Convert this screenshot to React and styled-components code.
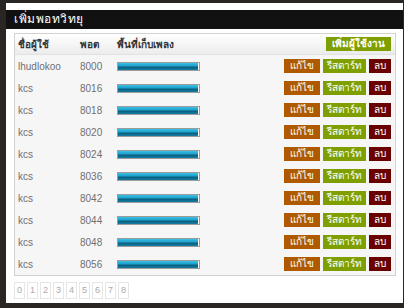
import React from 'react';
import styled, { createGlobalStyle } from 'styled-components';

const Global = createGlobalStyle`
  html, body {
    margin: 0;
    padding: 0;
    background: #2a2623;
    font-family: "Liberation Sans", "Noto Sans", sans-serif;
  }
`;

const Modal = styled.div`
  margin: 3px 1px 0 6px;
  height: 300px;
  background: #fff;
  padding-top: 7px;
  box-sizing: border-box;
`;

const TitleBar = styled.div`
  height: 19px;
  background: #111;
  color: #fff;
  font-size: 12px;
  line-height: 19px;
  padding-left: 8px;
  letter-spacing: 0.5px;
`;

const Panel = styled.div`
  margin: 4px 7px 0 8px;
  border: 1px solid #d2d2d2;
  background: #f6f6f6;
`;

const HeadRow = styled.div`
  display: flex;
  align-items: center;
  height: 20px;
  padding: 0 4px 0 3px;
  background: linear-gradient(#ffffff, #ececec);
  border-bottom: 1px solid #e2e2e2;
  font-size: 10px;
  font-weight: bold;
  color: #333;
`;

const Row = styled.div`
  display: flex;
  align-items: center;
  height: 22px;
  padding: 0 4px 0 3px;
  font-size: 10px;
  color: #707070;
`;

const NameCell = styled.div`
  width: 62px;
`;

const PortCell = styled.div`
  width: 37px;
`;

const SpaceCell = styled.div`
  flex: 1;
`;

const Bar = styled.div`
  width: 80px;
  height: 7px;
  border: 1px solid #9c9c9c;
  background: #fff;
  padding-right: 1px;
`;

const Fill = styled.div`
  height: 100%;
  background: linear-gradient(#3cc0e4 0%, #1fa2cc 40%, #0b5f80 60%, #157fa6 100%);
`;

const Actions = styled.div`
  display: flex;
  gap: 3px;
`;

const Btn = styled.div`
  height: 14px;
  line-height: 14px;
  padding: 0 ${p => p.pad || 4}px;
  color: #fff;
  font-size: 10px;
  background: ${p => p.bg};
  font-weight: ${p => (p.bold ? 'bold' : 'normal')};
`;

const Pager = styled.div`
  display: flex;
  gap: 2px;
  margin: 6px 0 0 8px;
`;

const Page = styled.div`
  width: 9px;
  height: 15px;
  border: 1px solid #e6e6e6;
  color: #aaa;
  font-size: 9px;
  line-height: 15px;
  text-align: center;
`;

const rows = [
  ['lhudlokoo', '8000'],
  ['kcs', '8016'],
  ['kcs', '8018'],
  ['kcs', '8020'],
  ['kcs', '8024'],
  ['kcs', '8036'],
  ['kcs', '8042'],
  ['kcs', '8044'],
  ['kcs', '8048'],
  ['kcs', '8056'],
];

export default function App() {
  return (
    <>
      <Global />
      <Modal>
        <TitleBar>เพิ่มพอทวิทยุ</TitleBar>
        <Panel>
          <HeadRow>
            <NameCell>ชื่อผู้ใช้</NameCell>
            <PortCell>พอต</PortCell>
            <SpaceCell>พื้นที่เก็บเพลง</SpaceCell>
            <Btn bg="#7f9f00" bold pad={6}>เพิ่มผู้ใช้งาน</Btn>
          </HeadRow>
          {rows.map(([name, port], i) => (
            <Row key={i}>
              <NameCell>{name}</NameCell>
              <PortCell>{port}</PortCell>
              <SpaceCell>
                <Bar><Fill /></Bar>
              </SpaceCell>
              <Actions>
                <Btn bg="#b05a00" pad={6}>แก้ไข</Btn>
                <Btn bg="#7f9f00" pad={4}>รีสตาร์ท</Btn>
                <Btn bg="#6b0000" pad={5}>ลบ</Btn>
              </Actions>
            </Row>
          ))}
        </Panel>
        <Pager>
          {[0, 1, 2, 3, 4, 5, 6, 7, 8].map(n => (
            <Page key={n}>{n}</Page>
          ))}
        </Pager>
      </Modal>
    </>
  );
}
